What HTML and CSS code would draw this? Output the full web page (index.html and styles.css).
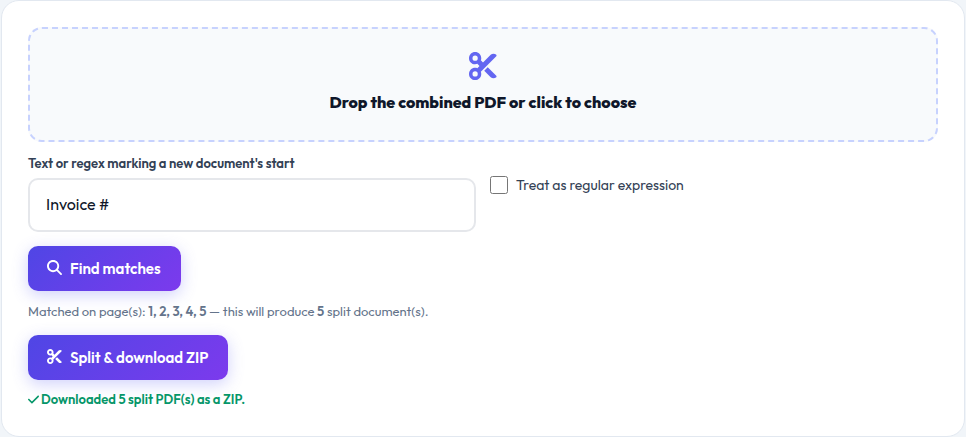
FILE: index.html
```html
<!DOCTYPE html>
<html lang="en">
<head>
<meta charset="utf-8">
<meta name="viewport" content="width=device-width, initial-scale=1">
<title>Split PDF</title>
<link rel="stylesheet" href="styles.css">
</head>
<body>
<svg class="sprite" aria-hidden="true">
  <symbol id="scissors" viewBox="0 0 512 512"><path d="M256 192l-39.5-39.5c4.9-12.6 7.5-26.2 7.5-40.5C224 50.1 173.9 0 112 0S0 50.1 0 112s50.1 112 112 112c14.3 0 27.9-2.7 40.5-7.5L192 256l-39.500 39.500c-12.600-4.900-26.200-7.500-40.500-7.500C50.100 288 0 338.100 0 400s50.100 112 112 112s112-50.100 112-112c0-14.300-2.700-27.900-7.500-40.500L499.200 76.800c7.100-7.100 7.100-18.500 0-25.600c-28.300-28.300-74.100-28.300-102.400 0L256 192zm22.600 150.600L396.800 460.800c28.300 28.300 74.100 28.300 102.400 0c7.100-7.100 7.100-18.500 0-25.600L342.600 278.600l-64 64zM64 112a48 48 0 1 1 96 0A48 48 0 1 1 64 112zm48 240a48 48 0 1 1 0 96 48 48 0 1 1 0-96z"/></symbol>
  <symbol id="search" viewBox="0 0 512 512"><path d="M416 208c0 45.900-14.900 88.300-40 122.700L502.600 457.400c12.500 12.500 12.500 32.800 0 45.300s-32.800 12.500-45.300 0L330.700 376c-34.400 25.200-76.800 40-122.700 40C93.100 416 0 322.900 0 208S93.100 0 208 0S416 93.100 416 208zM208 352a144 144 0 1 0 0-288 144 144 0 1 0 0 288z"/></symbol>
  <symbol id="check" viewBox="0 0 448 512"><path d="M438.600 105.400c12.500 12.500 12.500 32.800 0 45.300l-256 256c-12.500 12.500-32.800 12.500-45.300 0l-128-128c-12.500-12.500-12.500-32.800 0-45.300s32.800-12.500 45.300 0L160 338.700 393.400 105.400c12.500-12.500 32.800-12.500 45.300 0z"/></symbol>
</svg>
<main class="card">
  <button type="button" class="dropzone">
    <svg class="drop-icon" aria-hidden="true"><use href="#scissors"/></svg>
    <span>Drop the combined PDF or click to choose</span>
  </button>
  <div class="options">
    <div class="field">
      <label for="marker">Text or regex marking a new document's start</label>
      <input id="marker" type="text" value="Invoice #">
    </div>
    <label class="toggle"><input type="checkbox"><span>Treat as regular expression</span></label>
  </div>
  <button type="button" class="action"><svg aria-hidden="true"><use href="#search"/></svg><span>Find matches</span></button>
  <p class="matches">Matched on page(s): <strong>1, 2, 3, 4, 5</strong> — this will produce <strong>5</strong> split document(s).</p>
  <button type="button" class="action"><svg aria-hidden="true"><use href="#scissors"/></svg><span>Split &amp; download ZIP</span></button>
  <p class="status"><svg aria-hidden="true"><use href="#check"/></svg><span>Downloaded 5 split PDF(s) as a ZIP.</span></p>
</main>
</body>
</html>
```
FILE: styles.css
```css
* { box-sizing: border-box; }

body {
  margin: 0;
  padding: 0 1px 1px;
  background: #f1f5f9;
  color: #0f172a;
  font-family: Outfit, Lato, "Liberation Sans", sans-serif;
  font-size: 16px;
}

button, input { font: inherit; }
p { margin: 0; }
svg { fill: currentColor; flex: none; }
.sprite { display: none; }

.card {
  display: flex;
  flex-direction: column;
  align-items: flex-start;
  padding: 26px 26px 28px;
  border: 1px solid #e2e8f0;
  border-radius: 18px;
  background: #fff;
}

.dropzone {
  display: flex;
  flex-direction: column;
  align-items: center;
  gap: 12px;
  width: 100%;
  padding: 23px 24px 28px;
  border: 2px dashed #c7d2fe;
  border-radius: 14px;
  background: #f8fafc;
  color: #0f172a;
  font-size: 16px;
  font-weight: 800;
  line-height: 20px;
}

.drop-icon {
  width: 28px;
  height: 28px;
  color: #6366f1;
}

.options {
  display: grid;
  grid-template-columns: 1fr 1fr;
  gap: 14px;
  width: 100%;
  margin: 12px 0 14px;
}

.field {
  display: flex;
  flex-direction: column;
  gap: 6px;
}

.field label {
  color: #334155;
  font-size: 13px;
  font-weight: 600;
  line-height: 18px;
}

.field input {
  width: 100%;
  height: 54px;
  padding: 0 16px 2px;
  border: 2px solid #e5e7eb;
  border-radius: 10px;
  background: #fff;
  color: #0f172a;
}

.toggle {
  display: flex;
  align-items: center;
  align-self: start;
  gap: 8px;
  margin-top: 21px;
  color: #334155;
  font-size: 14px;
  line-height: 20px;
}

.toggle input {
  width: 18px;
  height: 18px;
  margin: 0;
}

.action {
  display: flex;
  align-items: center;
  gap: 8px;
  height: 45px;
  padding: 0 20px 0 19px;
  border: 0;
  border-radius: 10px;
  background: linear-gradient(135deg, #4f46e5, #7c3aed);
  box-shadow: 0 4px 16px rgba(99, 102, 241, 0.3);
  color: #fff;
  font-size: 15px;
  font-weight: 600;
}

.action svg {
  width: 15px;
  height: 15px;
  margin-bottom: 2px;
}

.matches {
  margin: 12px 0 16px;
  color: #64748b;
  font-size: 13px;
  line-height: 16px;
}

.matches strong { font-weight: 600; }

.status {
  display: flex;
  align-items: center;
  gap: 2px;
  margin-top: 10px;
  color: #059669;
  font-size: 13px;
  font-weight: 600;
  line-height: 18px;
}

.status svg {
  width: 11px;
  height: 13px;
}
```
